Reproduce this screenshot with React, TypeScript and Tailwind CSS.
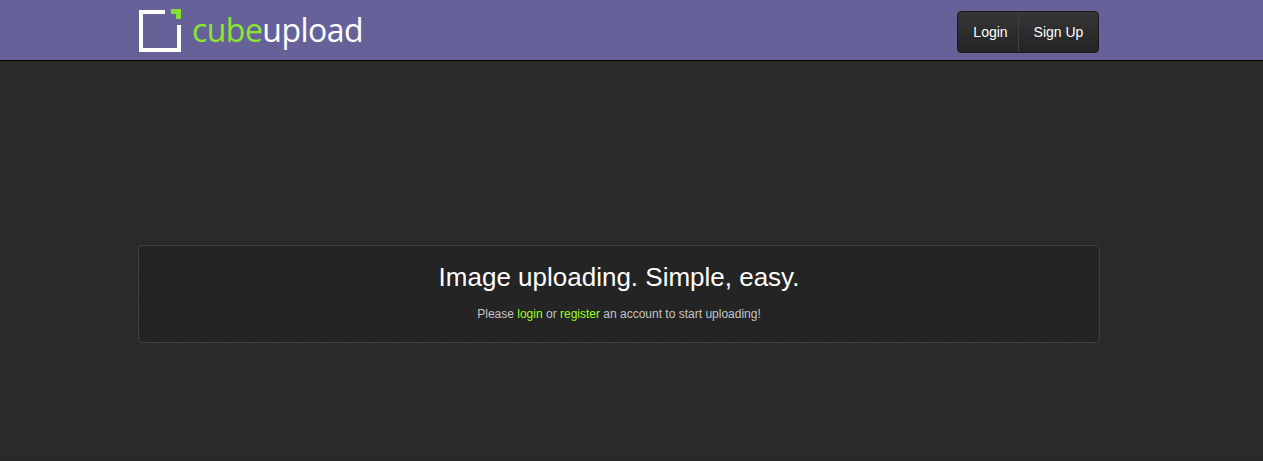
export default function App() {
  return (
    <div className="h-[461px] overflow-hidden bg-[#2a2a2a] bg-[radial-gradient(#262626_1px,transparent_1px)] bg-[length:3px_3px] font-['Liberation_Sans',Arial,sans-serif]">
      <header className="h-[61px] bg-[#666299] border-b border-black">
        <div className="w-[961px] ml-[138px] h-full flex items-start justify-between">
          <a href="#" className="flex items-start mt-[9px] ml-px">
            <svg width="42" height="43" viewBox="0 0 42 43" aria-hidden="true">
              <path d="M0 1H26V5H4V39H38V16H42V43H0Z" fill="#ffffff" />
              <path d="M32 0H42V10H37V5H32Z" fill="#84e02e" />
            </svg>
            <span className="ml-[11px] -mt-[1px] text-[32px] leading-[44px] font-['Open_Sans',sans-serif] tracking-[-0.55px] text-white">
              <span className="text-[#8ae632]">cube</span>upload
            </span>
          </a>
          <div className="mt-[11px] flex h-[42px] rounded-[4px] border border-[#1c1c1c] bg-gradient-to-b from-[#363636] to-[#242424] text-sm text-white">
            <a href="#" className="flex items-center justify-center w-[61px] pl-[5px] border-r border-[#3f3f3f]">Login</a>
            <a href="#" className="flex items-center justify-center w-[79px]">Sign Up</a>
          </div>
        </div>
      </header>
      <main className="w-[962px] ml-[138px] mt-[184px] h-[98px] rounded-[4px] border border-[#404040] bg-[#242424] text-center">
        <h1 className="mt-[15px] text-[26px] leading-[32px] text-white">Image uploading. Simple, easy.</h1>
        <p className="mt-[12px] text-xs leading-[18px] text-[#c4c4c4]">
          Please <a href="#" className="text-[#99ff22]">login</a> or <a href="#" className="text-[#99ff22]">register</a> an account to start uploading!
        </p>
      </main>
    </div>
  );
}
